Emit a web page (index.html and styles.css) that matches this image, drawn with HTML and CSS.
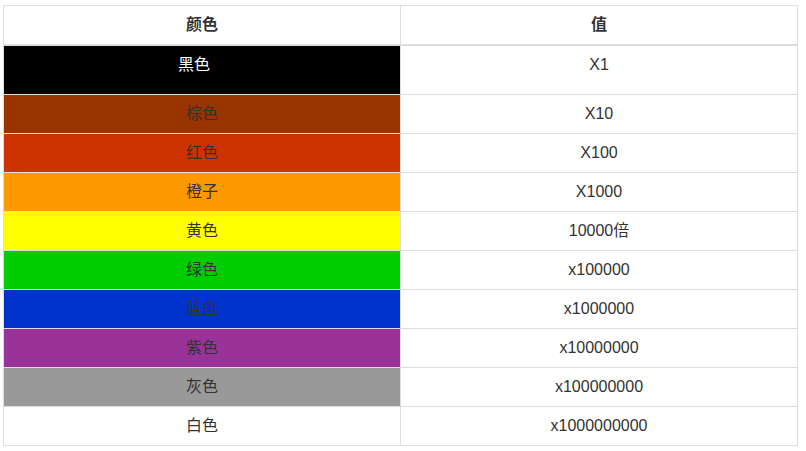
FILE: index.html
```html
<!DOCTYPE html>
<html lang="zh">
<head>
<meta charset="utf-8">
<link rel="stylesheet" href="styles.css">
</head>
<body>
<table class="codes">
  <thead>
    <tr><th>颜色</th><th>值</th></tr>
  </thead>
  <tbody>
    <tr class="tall"><td class="c-black">黑色</td><td>X1</td></tr>
    <tr><td class="c-brown">棕色</td><td>X10</td></tr>
    <tr><td class="c-red">红色</td><td>X100</td></tr>
    <tr><td class="c-orange">橙子</td><td>X1000</td></tr>
    <tr><td class="c-yellow">黄色</td><td>10000倍</td></tr>
    <tr><td class="c-green">绿色</td><td>x100000</td></tr>
    <tr><td class="c-blue">蓝色</td><td>x1000000</td></tr>
    <tr><td class="c-purple">紫色</td><td>x10000000</td></tr>
    <tr><td class="c-gray">灰色</td><td>x100000000</td></tr>
    <tr><td class="c-white">白色</td><td>x1000000000</td></tr>
  </tbody>
</table>
</body>
</html>
```
FILE: styles.css
```css
html, body {
  margin: 0;
  padding: 0;
  background: #fff;
}
body {
  padding: 5px 0 0 3px;
  font-family: "Liberation Sans", Arial, "Noto Sans CJK SC", sans-serif;
  font-size: 16px;
  color: #333;
}
.codes {
  width: 795px;
  border-collapse: collapse;
  table-layout: fixed;
}
.codes th,
.codes td {
  width: 50%;
  border: 1px solid #ddd;
  padding: 8px;
  line-height: 22px;
  text-align: center;
  vertical-align: top;
}
.codes th {
  font-weight: bold;
  border-bottom: 2px solid #ddd;
}
.codes tr.tall td {
  height: 32px;
}
.codes td.c-black {
  background: #000;
  color: #fff;
  padding-right: 24px;
}
.c-brown { background: #993300; }
.c-red { background: #cc3300; }
.c-orange { background: #ff9900; }
.c-yellow { background: #ffff00; }
.c-green { background: #00cc00; }
.c-blue { background: #0033cc; }
.c-purple { background: #993399; }
.c-gray { background: #999999; }
.c-white { background: #fff; }
```
